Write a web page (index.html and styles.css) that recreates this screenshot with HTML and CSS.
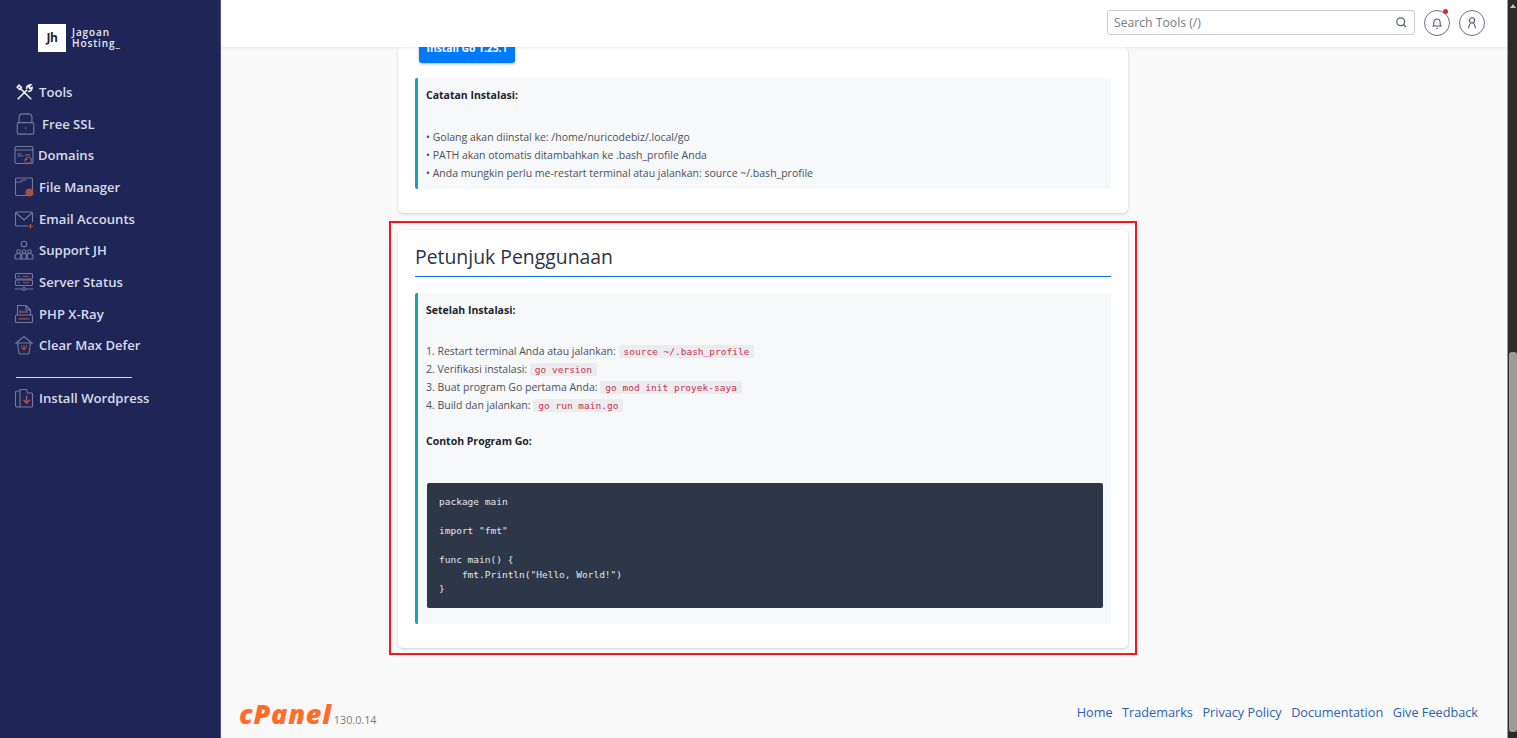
FILE: index.html
```html
<!DOCTYPE html>
<html lang="en">
<head>
    <meta charset="UTF-8">
    <meta name="viewport" content="width=device-width, initial-scale=1.0">
    <title>Petunjuk Penggunaan</title>
    <link rel="stylesheet" href="styles.css">
</head>
<body>
    <aside class="sidebar">
        <div class="brand">
            <div class="brand-mark">Jh</div>
            <div class="brand-name">Jagoan<br>Hosting_</div>
        </div>
        <nav class="side-nav">
            <a class="side-item item-tools">
                <svg class="ico ico-tools" viewBox="0 0 20 20" fill="none" stroke="#eef0f8" stroke-width="1.800"><path d="M3 18 13.500 7.500M5.500 5.500 18 18M13 6.500c-.5-2 1-4.500 4.500-4.500l-2 2.500 1 1.500 2.500-1c0 3-2.500 5-4.500 4M2.500 4.500 4.500 2.500 7 5 5 7z"/></svg>
                <span>Tools</span>
            </a>
            <a class="side-item item-ssl">
                <svg class="ico ico-ssl" viewBox="0 0 20 24" fill="none" stroke="#747b9e" stroke-width="1.200"><rect x="1" y="10.500" width="18" height="12.500" rx="1.500"/><path d="M3 10.500V5c0-2.500 1.500-4 4-4h6c2.500 0 4 1.500 4 4v5.500"/><path d="M10 15.500v2.500" stroke="#a8503f"/></svg>
                <span>Free SSL</span>
            </a>
            <a class="side-item item-domains">
                <svg class="ico" viewBox="0 0 20 20" fill="none" stroke="#747b9e" stroke-width="1.100"><rect x="1" y="1.500" width="18" height="17" rx="1.500"/><path d="M1 5h18M3.500 9h4M3.500 11h6M11 10h5"/><path d="M11.500 14.500a3 3 0 1 1 1 3M11 17v-2.500h2.500" stroke="#b5533f"/></svg>
                <span>Domains</span>
            </a>
            <a class="side-item">
                <svg class="ico" viewBox="0 0 20 20" fill="none" stroke="#747b9e" stroke-width="1.100"><path d="M13 18.500H3A1.500 1.500 0 0 1 1.500 17V2.500A1.500 1.500 0 0 1 3 1h14a1.500 1.500 0 0 1 1.500 1.500V13M1.500 5H7l1-2h4"/><circle cx="15.500" cy="15.500" r="4" fill="#a8503f" stroke="none"/></svg>
                <span>File Manager</span>
            </a>
            <a class="side-item">
                <svg class="ico" viewBox="0 0 20 20" fill="none" stroke="#747b9e" stroke-width="1.100"><path d="M14 17H3a1.500 1.500 0 0 1-1.500-1.500v-11A1.500 1.500 0 0 1 3 3h14a1.500 1.500 0 0 1 1.500 1.500V13M2 4l8 7 8-7"/><path d="M16.500 15v4.500M14.200 17.200h4.600" stroke="#b5533f"/></svg>
                <span>Email Accounts</span>
            </a>
            <a class="side-item">
                <svg class="ico" viewBox="0 0 20 20" fill="none" stroke="#747b9e" stroke-width="1.100"><circle cx="10" cy="4" r="2.800"/><circle cx="4.500" cy="11.500" r="1.800"/><circle cx="10" cy="11.500" r="1.800"/><circle cx="15.500" cy="11.500" r="1.800"/><path d="M1 19v-2a3.500 3.500 0 0 1 7 0v2M6.500 19v-2a3.500 3.500 0 0 1 7 0v2M12 19v-2a3.500 3.500 0 0 1 7 0v2M1 19h18"/></svg>
                <span>Support JH</span>
            </a>
            <a class="side-item">
                <svg class="ico" viewBox="0 0 20 20" fill="none" stroke="#747b9e" stroke-width="1.100"><rect x="1.500" y="1.500" width="17" height="5.500" rx="1.200"/><rect x="1.500" y="8" width="17" height="5.500" rx="1.200"/><path d="M1 17h18M4 4.200h2M4 10.700h2"/><path d="M9 4.200h6M9 10.700h6" stroke="#a8503f"/><circle cx="10" cy="17" r="1.500" fill="#1f2556"/></svg>
                <span>Server Status</span>
            </a>
            <a class="side-item">
                <svg class="ico" viewBox="0 0 20 20" fill="none" stroke="#747b9e" stroke-width="1.100"><path d="M3.500 11V1.500H12l4.500 4.500v5M12 1.500V6h4.500"/><rect x="1.500" y="11" width="17" height="7.500" rx="1"/><path d="M6 8h8M6 6v3M4.500 14.800h11" stroke="#a04a3c" stroke-width="1.300"/></svg>
                <span>PHP X-Ray</span>
            </a>
            <a class="side-item">
                <svg class="ico" viewBox="0 0 20 20" fill="none" stroke="#747b9e" stroke-width="1.100"><path d="M2 8 10 1.500 18 8zM3.500 8 5 18c0 .5.500 1 1 1h8c.5 0 1-.5 1-1l1.500-10"/><path d="M10 10v6M7.500 10.500c0 2.500 1 3.500 2.500 3.500s2.500-1 2.500-3.500" stroke="#a8503f"/></svg>
                <span>Clear Max Defer</span>
            </a>
            <hr class="side-rule">
            <a class="side-item">
                <svg class="ico" viewBox="0 0 20 20" fill="none" stroke="#747b9e" stroke-width="1.100"><path d="M6 3H3a1.500 1.500 0 0 0-1.500 1.500v13A1.500 1.500 0 0 0 3 19h3M6 1.500h6.500l1 3.500M6 1.500V19h11.500a1 1 0 0 0 1-1V6a1 1 0 0 0-1-1H13"/><path d="M12.500 7.500v7M9.500 12l3 3 3-3" stroke="#b5533f" stroke-width="1.400"/></svg>
                <span>Install Wordpress</span>
            </a>
        </nav>
    </aside>

    <div class="main">
        <header class="topbar">
            <div class="search">
                <span class="search-text">Search Tools (/)</span>
                <svg class="search-icon" viewBox="0 0 16 16" fill="none" stroke="#55596a" stroke-width="1.500"><circle cx="7" cy="7" r="4.800"/><path d="m10.500 10.500 3 3"/></svg>
            </div>
            <div class="round-btn has-dot">
                <svg viewBox="0 0 16 16" fill="none" stroke="#4c5270" stroke-width="1.200"><path d="M3.500 11.500c1-1 1-2 1-4.500a3.500 3.500 0 0 1 7 0c0 2.500 0 3.500 1 4.500zM7 14h2"/></svg>
            </div>
            <div class="round-btn">
                <svg viewBox="0 0 16 16" fill="none" stroke="#4c5270" stroke-width="1.200"><circle cx="8" cy="5" r="3"/><path d="M4 14c0-3 1.500-5 2.500-6M12 14c0-3-1.500-5-2.500-6"/></svg>
            </div>
        </header>

        <div class="content">
            <section class="card card-install">
                <button class="btn-install">Install Go 1.25.1</button>
                <div class="note note-install">
                    <p class="note-title">Catatan Instalasi:</p>
                    <p class="note-lines">• Golang akan diinstal ke: /home/nuricodebiz/.local/go<br>
                    • PATH akan otomatis ditambahkan ke .bash_profile Anda<br>
                    • Anda mungkin perlu me-restart terminal atau jalankan: source ~/.bash_profile</p>
                </div>
            </section>

            <div class="highlight">
                <section class="card card-usage">
                    <h2 class="card-title">Petunjuk Penggunaan</h2>
                    <div class="note note-usage">
                        <p class="note-title">Setelah Instalasi:</p>
                        <p class="note-lines">1. Restart terminal Anda atau jalankan: <code>source ~/.bash_profile</code><br>
                        2. Verifikasi instalasi: <code>go version</code><br>
                        3. Buat program Go pertama Anda: <code>go mod init proyek-saya</code><br>
                        4. Build dan jalankan: <code>go run main.go</code></p>
                        <p class="note-title note-title-second">Contoh Program Go:</p>
                        <pre class="code-block">package main

import "fmt"

func main() {
    fmt.Println("Hello, World!")
}</pre>
                    </div>
                </section>
            </div>

            <footer class="footer">
                <div class="footer-logo">
                    <span class="cpanel-mark">cPanel</span>
                    <span class="cpanel-version">130.0.14</span>
                </div>
                <div class="footer-links">
                    <a>Home</a>
                    <a>Trademarks</a>
                    <a>Privacy Policy</a>
                    <a>Documentation</a>
                    <a>Give Feedback</a>
                </div>
            </footer>
        </div>
    </div>

    <div class="scrollbar">
        <div class="scroll-arrow"></div>
        <div class="scroll-thumb"></div>
    </div>
</body>
</html>
```

FILE: styles.css
```css
* {
    box-sizing: border-box;
}
body {
    margin: 0;
    height: 738px;
    overflow: hidden;
    display: flex;
    font-family: 'Open Sans', sans-serif;
    background-color: #f9f9fa;
    color: #2d3340;
}

/* sidebar */
.sidebar {
    width: 221px;
    flex-shrink: 0;
    background-color: #1f2556;
    border-right: 1px solid #4a5087;
}
.brand {
    display: flex;
    align-items: center;
    gap: 6px;
    padding: 24px 0 0 38px;
}
.brand-mark {
    width: 28px;
    height: 28px;
    background-color: #fff;
    color: #1f2330;
    font-size: 12px;
    font-weight: 700;
    letter-spacing: -0.5px;
    text-align: center;
    line-height: 28px;
}
.brand-name {
    color: #e8ebf5;
    font-size: 10px;
    font-weight: 600;
    line-height: 11px;
    letter-spacing: 0.9px;
}
.side-nav {
    display: flex;
    flex-direction: column;
    margin-top: 24px;
}
.side-item {
    display: flex;
    align-items: center;
    gap: 5px;
    height: 31.700px;
    padding-left: 14px;
    color: #d9dcea;
    font-size: 13.100px;
    font-weight: 600;
}
.ico {
    width: 20px;
    height: 20px;
    flex-shrink: 0;
}
.item-tools {
    padding-left: 15px;
}
.ico-tools {
    width: 18px;
    height: 18px;
    margin-right: 1px;
}
.item-ssl {
    padding-left: 16px;
    gap: 7px;
}
.ico-ssl {
    width: 19px;
    height: 22px;
}
.item-domains {
    gap: 4px;
}
.side-rule {
    width: 116px;
    height: 1px;
    margin: 16px 0 4px 16px;
    border: none;
    background-color: #d9dcea;
}

/* main column */
.main {
    flex: 1;
    min-width: 0;
    display: flex;
    flex-direction: column;
    overflow: hidden;
}
.topbar {
    height: 47px;
    flex-shrink: 0;
    display: flex;
    align-items: center;
    justify-content: flex-end;
    gap: 9px;
    padding: 0 22px 2px 0;
    background-color: #fff;
    box-shadow: 0 1px 3px rgba(0, 0, 0, 0.08);
    position: relative;
    z-index: 2;
}
.search {
    width: 308px;
    height: 25px;
    display: flex;
    align-items: center;
    justify-content: space-between;
    padding: 0 6px;
    border: 1px solid #c9ccd6;
    border-radius: 3px;
}
.search-text {
    color: #767b87;
    font-size: 12.200px;
}
.search-icon {
    width: 13px;
    height: 13px;
}
.round-btn {
    width: 26px;
    height: 26px;
    display: flex;
    align-items: center;
    justify-content: center;
    border: 1px solid #6b7088;
    border-radius: 50%;
    position: relative;
}
.round-btn svg {
    width: 14px;
    height: 14px;
}
.has-dot::after {
    content: "";
    position: absolute;
    top: -2px;
    right: 1px;
    width: 5px;
    height: 5px;
    background-color: #e8202e;
    border-radius: 50%;
}

/* content */
.content {
    flex: 1;
    min-height: 0;
    display: flex;
    flex-direction: column;
    align-items: center;
    padding-right: 202px;
}
.card {
    width: 730px;
    padding: 0 17px;
    background-color: #fff;
    border-radius: 5px;
    box-shadow: 0 1px 3px rgba(0, 0, 0, 0.18);
}
.card-install {
    height: 166px;
    padding-bottom: 24px;
    flex-shrink: 0;
}
.btn-install {
    display: block;
    width: 96px;
    height: 30px;
    margin: -14px 0 0 4px;
    padding: 0;
    border: none;
    border-radius: 3px;
    background-color: #007bff;
    color: #fff;
    font-family: inherit;
    font-size: 10.300px;
    font-weight: 700;
    box-shadow: 0 1px 3px rgba(0, 0, 0, 0.3);
}
.note {
    margin-top: 15px;
    padding: 8px 8px 10px;
    background-color: #f7f8fa;
    border-left: 3px solid #17a2b8;
    border-radius: 2px;
    font-size: 10.500px;
    line-height: 18px;
}
.note p {
    margin: 0;
}
.note-title {
    color: #20242c;
    font-weight: 700;
}
.note-lines {
    color: #4b5058;
}
.note-install {
    height: 111px;
}
.note-install .note-lines {
    margin-top: 16px;
    padding-top: 8px;
}
.highlight {
    margin-top: 8px;
    padding: 7px 7px 5px;
    border: 2px solid #f5161e;
    flex-shrink: 0;
}
.card-usage {
    height: 418px;
    padding-top: 12px;
}
.card-title {
    margin: 0;
    padding-bottom: 4px;
    border-bottom: 1.500px solid #0d6efd;
    color: #2d3340;
    font-size: 19.400px;
    font-weight: 400;
    line-height: 30px;
}
.note-usage {
    margin-top: 16px;
    height: 331px;
}
.note-usage .note-lines {
    margin-top: 23px;
}
.note-title-second {
    margin-top: 18px !important;
}
code {
    padding: 1px 5px;
    background-color: #ebecef;
    border-radius: 2px;
    color: #c7324f;
    font-family: 'DejaVu Sans Mono', monospace;
    font-size: 9.500px;
    line-height: 1;
}
.code-block {
    margin: 33px 0 0 1px;
    height: 125px;
    padding: 12px;
    background-color: #2d3748;
    border-radius: 2px;
    color: #e4e7ec;
    font-family: 'DejaVu Sans Mono', monospace;
    font-size: 9.500px;
    line-height: 14.500px;
}

/* footer */
.footer {
    margin-top: auto;
    align-self: stretch;
    width: 1286px;
    display: flex;
    align-items: flex-end;
    justify-content: space-between;
    padding: 0 29px 9px 18px;
}
.footer-logo {
    display: flex;
    align-items: flex-end;
    gap: 2px;
}
.cpanel-mark {
    color: #ff6c2c;
    font-size: 27px;
    font-weight: 800;
    font-style: italic;
    letter-spacing: 0.8px;
    line-height: 30px;
}
.cpanel-version {
    margin-bottom: 2px;
    color: #767b87;
    font-size: 10.800px;
    line-height: 15px;
}
.footer-links {
    display: flex;
    gap: 9.500px;
    margin-bottom: 8px;
    color: #2f5fa8;
    font-size: 12.700px;
}

/* scrollbar */
.scrollbar {
    width: 10px;
    flex-shrink: 0;
    background-color: #2b2b2b;
    border-left: 1px solid #9a9a9a;
    display: flex;
    flex-direction: column;
    justify-content: space-between;
}
.scroll-arrow {
    width: 0;
    height: 0;
    margin: 4px auto 0;
    border-left: 3px solid transparent;
    border-right: 3px solid transparent;
    border-bottom: 4px solid #c4c4c4;
}
.scroll-thumb {
    height: 380px;
    margin: 0 0 6px 1px;
    background-color: #9c9c9c;
    border-radius: 3px;
}
```
